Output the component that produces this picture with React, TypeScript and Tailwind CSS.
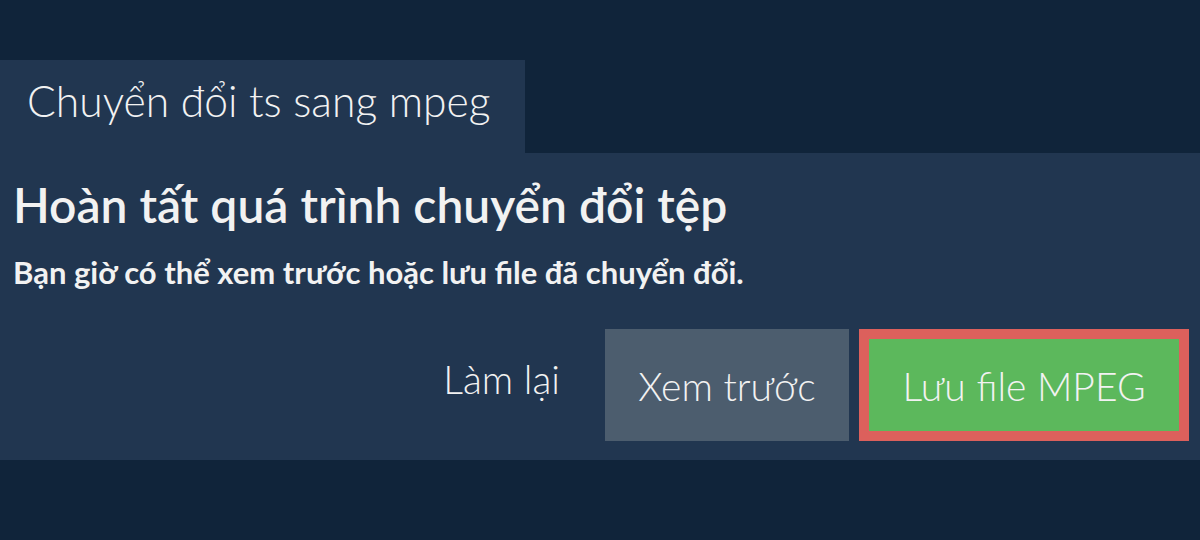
import React from 'react';

export default function App() {
  return (
    <div
      className="min-h-[540px] w-full bg-[#10243a] pt-[60px] text-[#f2f2f2]"
      style={{ fontFamily: 'Lato, "Noto Sans", sans-serif' }}
    >
      <div className="flex h-[93px] w-[525px] items-center bg-[#213650] pl-[27px]">
        <span className="pb-[10px] text-[42.6px] font-light leading-none">Chuyển đổi ts sang mpeg</span>
      </div>

      <div className="bg-[#213650] pb-[19px] pl-[13px] pr-[11px] pt-[24px]">
        <h1 className="text-[48px] font-semibold leading-[56px]">Hoàn tất quá trình chuyển đổi tệp</h1>
        <p className="mt-[21px] text-[31px] font-bold leading-[36px]">
          Bạn giờ có thể xem trước hoặc lưu file đã chuyển đổi.
        </p>

        <div className="mt-[39px] flex items-center justify-end">
          <button className="mr-[45px] pb-[12px] text-[39px] font-light">Làm lại</button>
          <button className="h-[112px] w-[244px] bg-[#4c5d6e] pt-[3px] text-[39px] font-light">Xem trước</button>
          <button className="ml-[10px] h-[112px] w-[330px] border-[10px] border-[#dc605c] bg-[#5cb85c] pt-[3px] text-[39px] font-light">
            Lưu file MPEG
          </button>
        </div>
      </div>
    </div>
  );
}
